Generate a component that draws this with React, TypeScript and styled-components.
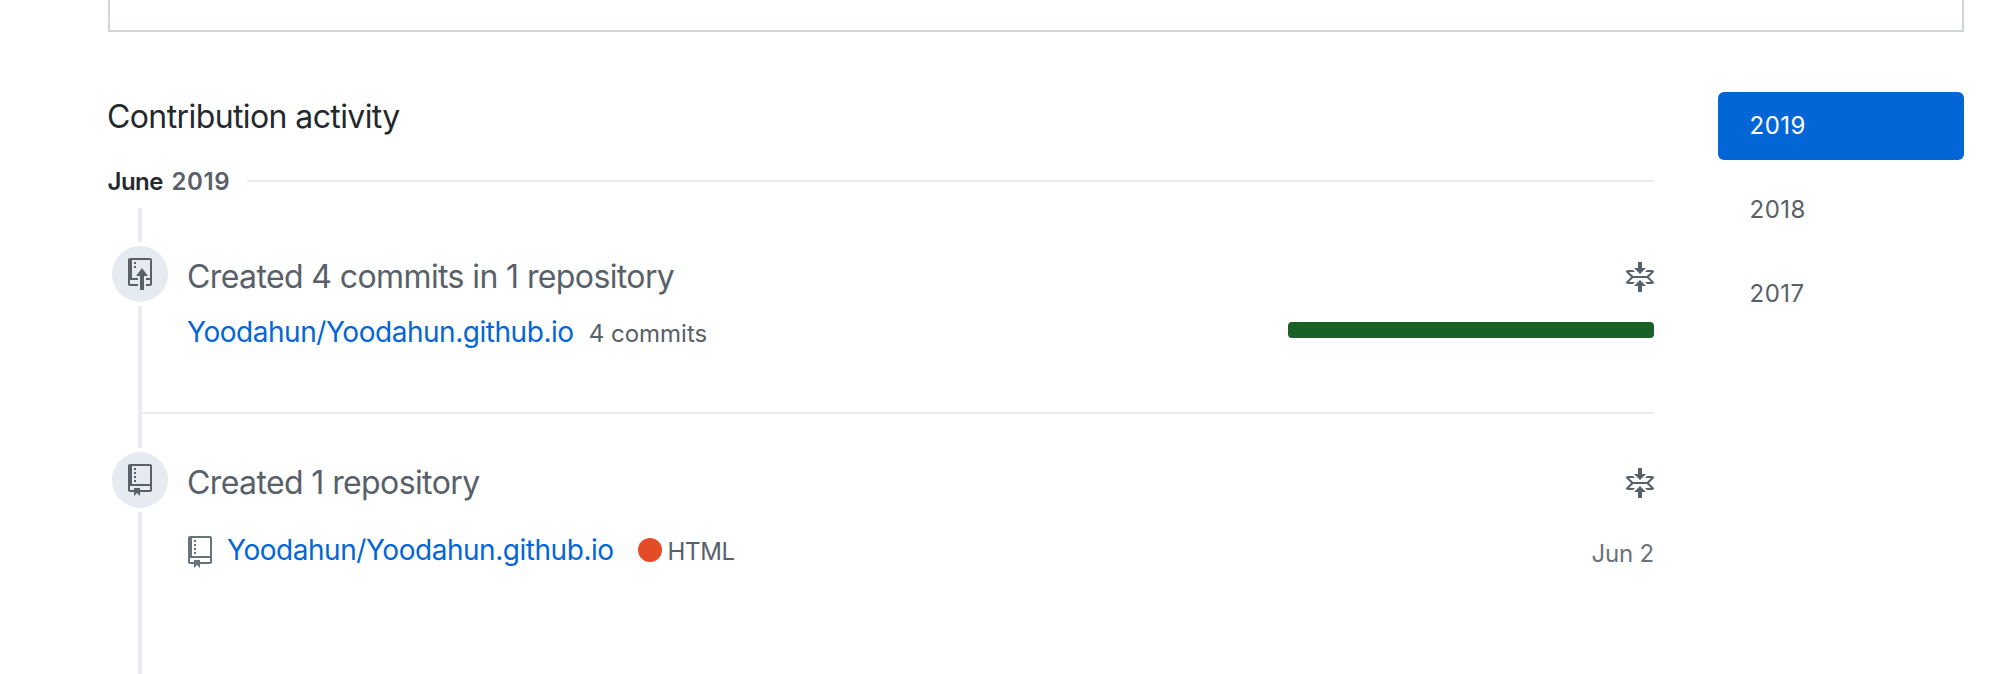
import React from 'react';
import styled, { createGlobalStyle } from 'styled-components';

const GlobalStyle = createGlobalStyle`
  *, *::before, *::after { box-sizing: border-box; }
  body {
    margin: 0;
    background: #fff;
    color: #24292e;
    font-family: Inter, "Liberation Sans", sans-serif;
    font-size: 24px;
    line-height: 36px;
  }
`;

const Page = styled.main`
  height: 674px;
  padding: 0 48px 0 108px;
  overflow: hidden;
`;

const CalendarPanel = styled.section`
  height: 32px;
  border: 2px solid #d1d5da;
  border-top: 0;
`;

const Columns = styled.div`
  display: flex;
  align-items: flex-start;
  gap: 64px;
  padding-top: 60px;
`;

const Activity = styled.section`
  flex: 1;
  min-width: 0;
`;

const Heading = styled.h2`
  margin: 0 0 23px -1px;
  padding-top: 1px;
  font-size: 32px;
  font-weight: 400;
  line-height: 47px;
  letter-spacing: -0.6px;
`;

const MonthHeading = styled.h3`
  display: flex;
  align-items: center;
  margin: 0 0 9px;
  font-size: 24px;
  font-weight: 600;
  letter-spacing: -0.5px;

  &::after {
    content: '';
    flex: 1;
    height: 2px;
    margin-left: 16px;
    background: #eaecef;
  }
`;

const MonthName = styled.span`
  width: 62.5px;
  margin-left: -0.5px;
  padding-top: 1px;
  line-height: 35px;
`;

const MonthYear = styled.span`
  width: 60px;
  margin-left: 1px;
  padding: 1px 0 0 0.5px;
  color: #586069;
  line-height: 35px;
  letter-spacing: 0.6px;
`;

const TimelineItem = styled.article<{ $height: number }>`
  display: flex;
  height: ${({ $height }) => $height}px;
`;

const Rail = styled.div`
  display: flex;
  flex: none;
  flex-direction: column;
  align-items: flex-end;
  width: 34px;
`;

const RailLine = styled.span<{ $height?: number }>`
  width: 4px;
  ${({ $height }) => ($height ? `height: ${$height}px;` : 'flex: 1;')}
  background: #eaecef;
`;

const Badge = styled.span`
  display: flex;
  flex: none;
  align-items: center;
  justify-content: center;
  width: 56px;
  height: 56px;
  margin: 4px -26px 4px 0;
  border-radius: 50%;
  background: #e6ebf1;
  color: #586069;
`;

const ItemBody = styled.div<{ $divided?: boolean }>`
  flex: 1;
  padding: 45px 0 0 46px;
  border-bottom: ${({ $divided }) => ($divided ? '2px solid #eaecef' : '0')};
`;

const ItemHeader = styled.header`
  display: flex;
  align-items: center;
  justify-content: space-between;
  height: 48px;
  color: #586069;
`;

const ItemTitle = styled.h4`
  margin: 0 0 0 -1px;
  font-size: 32px;
  font-weight: 400;
  line-height: 48px;
  letter-spacing: -0.61px;
`;

const FoldButton = styled.button`
  display: flex;
  padding: 2px 0 0;
  border: 0;
  background: none;
  color: inherit;
`;

const DetailRow = styled.div<{ $offset: number }>`
  display: flex;
  align-items: baseline;
  margin-top: ${({ $offset }) => $offset}px;
  color: #586069;
  line-height: 42px;
`;

const RepoLink = styled.a`
  margin-left: -1px;
  color: #0366d6;
  font-size: 28px;
  letter-spacing: -0.46px;
  text-decoration: none;
`;

const CommitCount = styled.span`
  margin-left: 15px;
`;

const ProgressBar = styled.span`
  align-self: flex-start;
  width: 366px;
  height: 16px;
  margin: 11px 0 0 auto;
  border-radius: 4px;
  background: #196127;
`;

const RepoMark = styled.span`
  display: flex;
  align-self: flex-start;
  margin: 7px 16px 0 0;
  color: #6a737d;
`;

const LanguageDot = styled.span`
  align-self: flex-start;
  width: 24px;
  height: 24px;
  margin: 9px 5.5px 0 24.4px;
  border-radius: 50%;
  background: #e34c26;
`;

const Language = styled.span`
  letter-spacing: -0.33px;
`;

const CreatedDate = styled.time`
  align-self: flex-start;
  margin: 4px 0 0 auto;
  color: #6a737d;
  letter-spacing: -0.2px;
`;

const YearList = styled.nav`
  display: flex;
  flex: none;
  flex-direction: column;
  gap: 16px;
  width: 246px;
`;

const YearLink = styled.a<{ $selected?: boolean }>`
  height: 68px;
  padding: 16px 31.5px;
  border-radius: 6px;
  background: ${({ $selected }) => ($selected ? '#0366d6' : 'transparent')};
  color: ${({ $selected }) => ($selected ? '#fff' : '#586069')};
  letter-spacing: 0.5px;
  text-decoration: none;
`;

const RepoIcon = () => (
  <svg width="24" height="32" viewBox="0 0 12 16" fill="currentColor" fillRule="evenodd" aria-hidden="true">
    <path d="M4 9H3V8h1v1zm0-3H3v1h1V6zm0-2H3v1h1V4zm0-2H3v1h1V2zm8-1v12c0 .55-.45 1-1 1H6v2l-1.5-1.5L3 16v-2H1c-.55 0-1-.45-1-1V1c0-.55.45-1 1-1h10c.55 0 1 .45 1 1zm-1 10H1v2h2v-1h3v1h5v-2zm0-10H2v9h9V1z" />
  </svg>
);

const RepoPushIcon = () => (
  <svg width="24" height="32" viewBox="0 0 12 16" fill="currentColor" fillRule="evenodd" aria-hidden="true">
    <path d="M4 3H3V2h1v1zM3 5h1V4H3v1zm4 0L4 9h2v7h2V9h2L7 5zm4-5H1C.45 0 0 .45 0 1v12c0 .55.45 1 1 1h4v-1H1v-2h4v-1H2V1h9.02L11 10H9v1h2v2H9v1h2c.55 0 1-.45 1-1V1c0-.55-.45-1-1-1z" />
  </svg>
);

const FoldIcon = () => (
  <svg width="28" height="32" viewBox="0 0 14 16" fill="currentColor" fillRule="evenodd" aria-hidden="true">
    <path d="M7 9l3 3H8v3H6v-3H4l3-3zm3-6H8V0H6v3H4l3 3 3-3zm4 2c0-.55-.45-1-1-1h-2.5l-1 1h3l-2 2h-7l-2-2h3l-1-1H1c-.55 0-1 .45-1 1l2.5 2.5L0 10c0 .55.45 1 1 1h2.5l1-1h-3l2-2h7l2 2h-3l1 1H13c.55 0 1-.45 1-1l-2.5-2.5L14 5z" />
  </svg>
);

interface EntryProps {
  title: string;
  icon: React.ReactNode;
  height: number;
  divided?: boolean;
  children: React.ReactNode;
}

const Entry = ({ title, icon, height, divided, children }: EntryProps) => (
  <TimelineItem $height={height}>
    <Rail>
      <RailLine $height={34} />
      <Badge>{icon}</Badge>
      <RailLine />
    </Rail>
    <ItemBody $divided={divided}>
      <ItemHeader>
        <ItemTitle>{title}</ItemTitle>
        <FoldButton aria-label="Collapse"><FoldIcon /></FoldButton>
      </ItemHeader>
      {children}
    </ItemBody>
  </TimelineItem>
);

const years = ['2019', '2018', '2017'];

export default function App() {
  return (
    <>
      <GlobalStyle />
      <Page>
        <CalendarPanel />
        <Columns>
          <Activity>
            <Heading>Contribution activity</Heading>
            <MonthHeading>
              <MonthName>June</MonthName> <MonthYear>2019</MonthYear>
            </MonthHeading>
            <Entry title="Created 4 commits in 1 repository" icon={<RepoPushIcon />} height={206} divided>
              <DetailRow $offset={10}>
                <RepoLink>Yoodahun/Yoodahun.github.io</RepoLink>
                <CommitCount>4 commits</CommitCount>
                <ProgressBar />
              </DetailRow>
            </Entry>
            <Entry title="Created 1 repository" icon={<RepoIcon />} height={260}>
              <DetailRow $offset={22}>
                <RepoMark><RepoIcon /></RepoMark>
                <RepoLink>Yoodahun/Yoodahun.github.io</RepoLink>
                <LanguageDot />
                <Language>HTML</Language>
                <CreatedDate>Jun 2</CreatedDate>
              </DetailRow>
            </Entry>
          </Activity>
          <YearList>
            {years.map((year) => (
              <YearLink key={year} $selected={year === '2019'}>{year}</YearLink>
            ))}
          </YearList>
        </Columns>
      </Page>
    </>
  );
}
